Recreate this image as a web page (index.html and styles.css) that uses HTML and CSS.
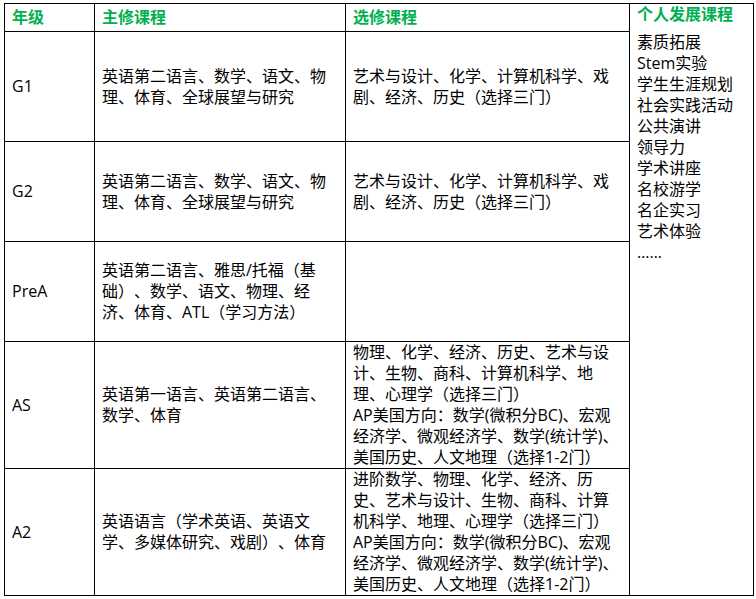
FILE: index.html
```html
<!DOCTYPE html>
<html lang="zh-CN">
<head>
<meta charset="utf-8">
<title>课程设置</title>
<link rel="stylesheet" href="styles.css">
</head>
<body>
<table class="courses">
  <colgroup>
    <col class="c-grade">
    <col class="c-major">
    <col class="c-elective">
    <col class="c-dev">
  </colgroup>
  <tr class="r-head">
    <th>年级</th>
    <th>主修课程</th>
    <th>选修课程</th>
    <td class="dev" rowspan="6">
      <div class="dev-title">个人发展课程</div>
      <div>素质拓展</div>
      <div>Stem实验</div>
      <div>学生生涯规划</div>
      <div>社会实践活动</div>
      <div>公共演讲</div>
      <div>领导力</div>
      <div>学术讲座</div>
      <div>名校游学</div>
      <div>名企实习</div>
      <div>艺术体验</div>
      <div>……</div>
    </td>
  </tr>
  <tr class="r-g1">
    <td>G1</td>
    <td>英语第二语言、数学、语文、物理、体育、全球展望与研究</td>
    <td>艺术与设计、化学、计算机科学、戏剧、经济、历史（选择三门）</td>
  </tr>
  <tr class="r-g2">
    <td>G2</td>
    <td>英语第二语言、数学、语文、物理、体育、全球展望与研究</td>
    <td>艺术与设计、化学、计算机科学、戏剧、经济、历史（选择三门）</td>
  </tr>
  <tr class="r-prea">
    <td>PreA</td>
    <td>英语第二语言、雅思/托福（基础）、数学、语文、物理、经济、体育、ATL（学习方法）</td>
    <td></td>
  </tr>
  <tr class="r-as">
    <td>AS</td>
    <td>英语第一语言、英语第二语言、数学、体育</td>
    <td>物理、化学、经济、历史、艺术与设计、生物、商科、计算机科学、地理、心理学（选择三门）<br>AP美国方向：数学(微积分BC)、宏观经济学、微观经济学、数学(统计学)、美国历史、人文地理（选择1-2门）</td>
  </tr>
  <tr class="r-a2">
    <td>A2</td>
    <td>英语语言（学术英语、英语文学、多媒体研究、戏剧）、体育</td>
    <td>进阶数学、物理、化学、经济、历史、艺术与设计、生物、商科、计算机科学、地理、心理学（选择三门）<br>AP美国方向：数学(微积分BC)、宏观经济学、微观经济学、数学(统计学)、美国历史、人文地理（选择1-2门）</td>
  </tr>
</table>
</body>
</html>
```
FILE: styles.css
```css
html, body {
  margin: 0;
  padding: 0;
  background: #fff;
}

body {
  font-family: "Open Sans", "Noto Sans CJK SC", sans-serif;
  font-size: 16px;
  line-height: 21px;
  color: #000;
  text-spacing-trim: space-all;
}

.courses {
  border-collapse: collapse;
  table-layout: fixed;
  width: 749px;
  margin: 3px 0 0 4px;
}

.c-grade { width: 90px; }
.c-major { width: 251px; }
.c-elective { width: 284px; }
.c-dev { width: 124px; }

.courses th,
.courses td {
  border: 1px solid #000;
  padding: 0 7px;
  text-align: left;
  vertical-align: middle;
  font-weight: normal;
}

.courses th {
  color: #00b050;
  font-weight: 700;
}

.r-head { height: 28px; }
.r-g1 { height: 110px; }
.r-g2 { height: 100px; }
.r-prea { height: 100px; }
.r-as { height: 127px; }
.r-a2 { height: 127px; }

.courses td.dev {
  vertical-align: top;
  padding-top: 0;
}

.dev-title {
  color: #00b050;
  font-weight: 700;
  margin-bottom: 7px;
}
```
